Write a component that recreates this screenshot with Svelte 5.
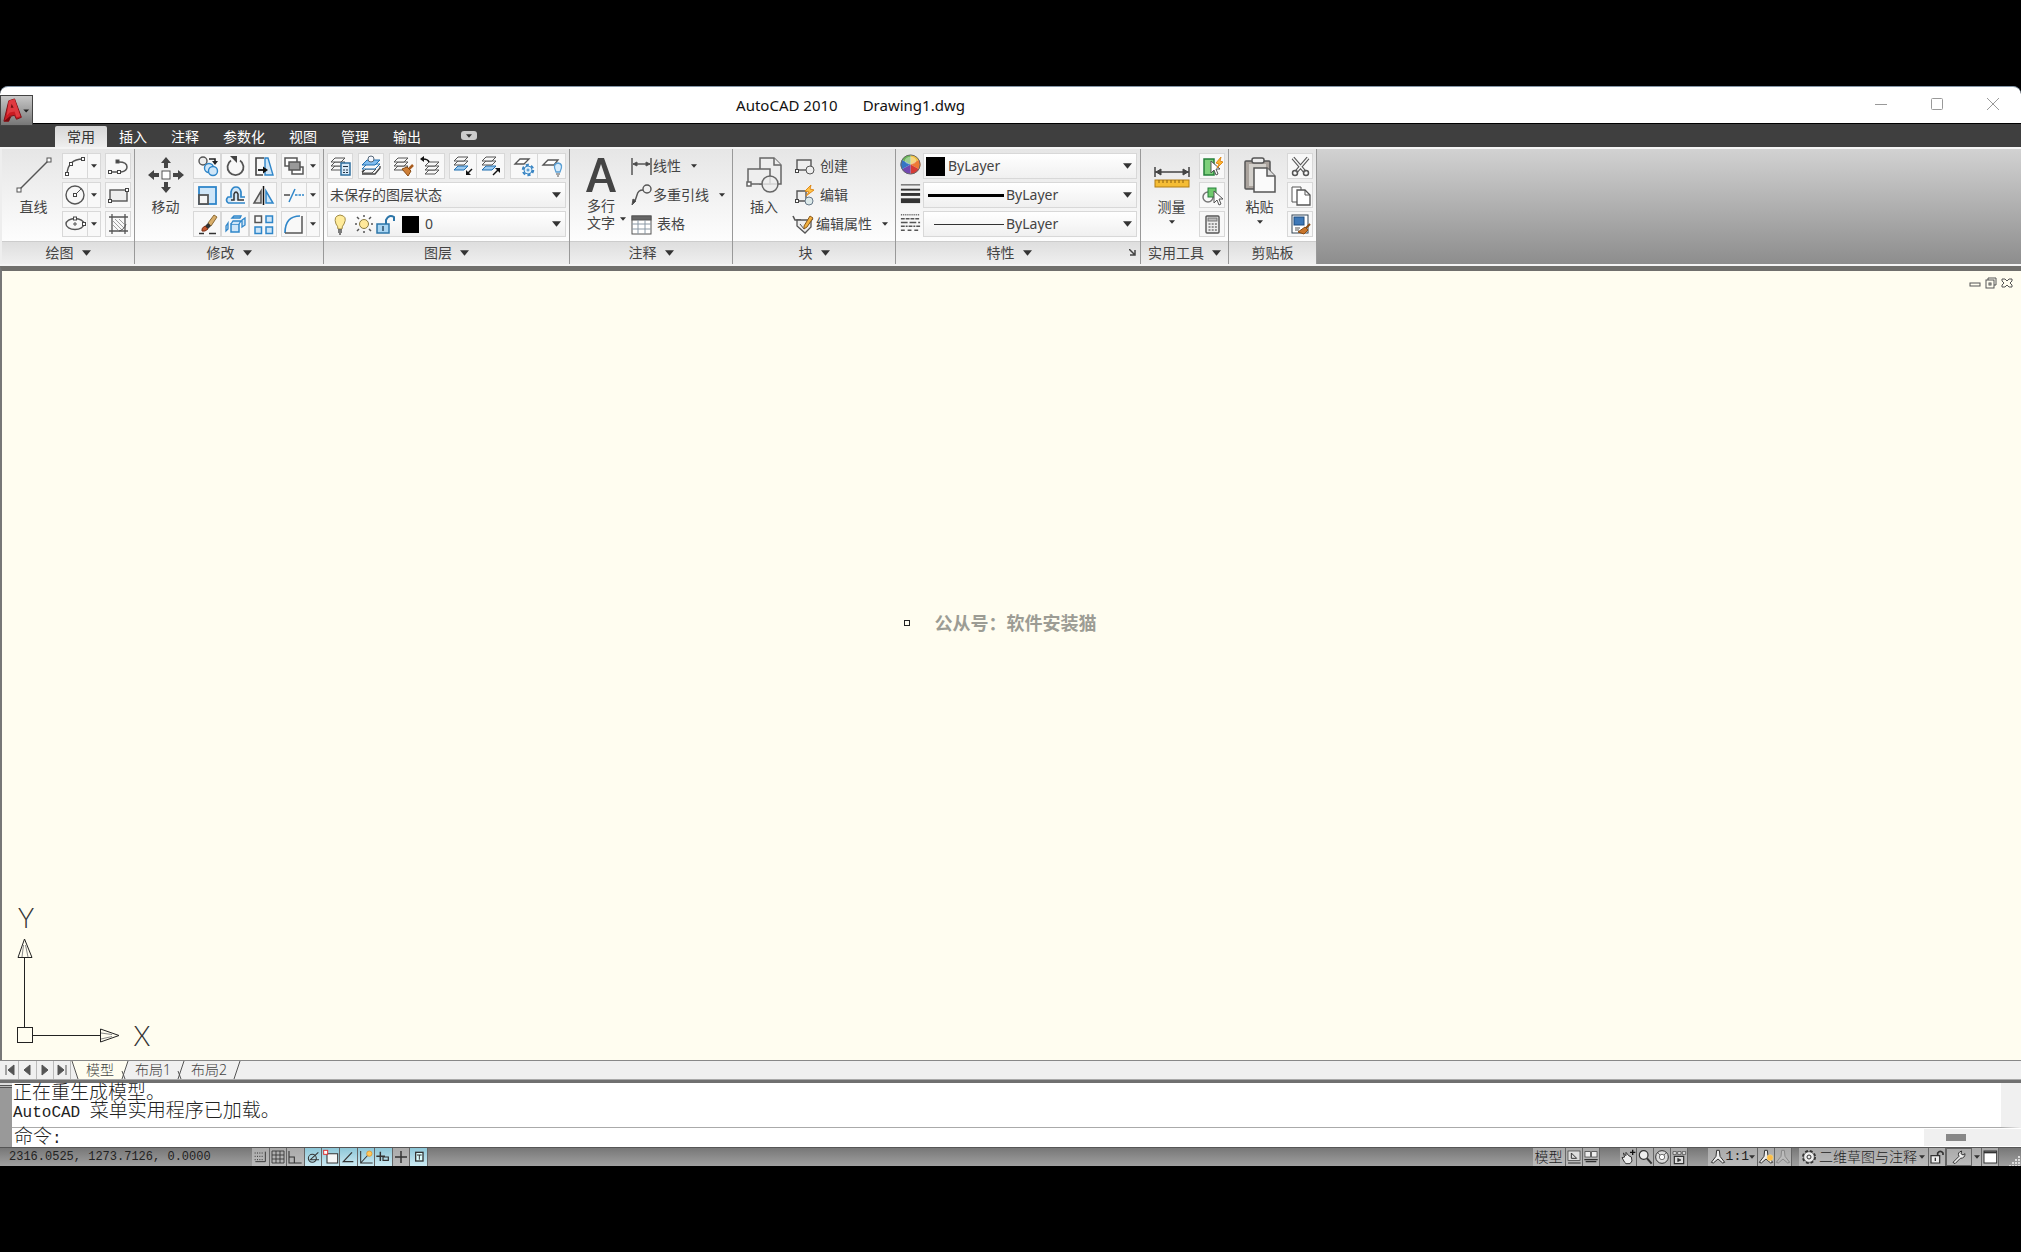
<script>
    const tabs = ["常用", "插入", "注释", "参数化", "视图", "管理", "输出"];
    let activeTab = $state("常用");
    let command = $state("");

    const sheet = (y, fill = "#f8f8f8", stroke = "#555") =>
        `<path d="M3 ${y + 4}L7 ${y}H17L13 ${y + 4}Z" fill="${fill}" stroke="${stroke}"/>`;
    const node = (x, y) =>
        `<rect x="${x - 1.5}" y="${y - 1.5}" width="3" height="3" fill="#fff" stroke="#444"/>`;
    const blue = `fill="#cfe6f8" stroke="#2f86c9"`;

    // 24px grid
    const icons = {
        arc: `<path d="M4 20Q5 5 20 5" stroke-width="1.4"/>${node(4, 20)}${node(8, 10)}${node(20, 5)}`,
        pline: `<path d="M4 18H15Q21 17 21 13Q21 8 13 8" stroke-width="1.5"/>${node(4, 18)}${node(13, 18)}<rect x="10" y="6" width="3" height="3" fill="#444"/>`,
        circle: `<circle cx="12" cy="12" r="9" stroke-width="1.4"/><path d="M12 12L18 6"/>${node(12, 12)}`,
        rect: `<rect x="4" y="7" width="17" height="11" fill="#eee" stroke-width="1.4"/>${node(4, 18)}${node(21, 7)}`,
        ellipse: `<ellipse cx="12" cy="12" rx="9" ry="5.5" stroke-width="1.4"/><path d="M10 12H14M12 10V14"/>${node(12, 6.5)}${node(21, 12)}`,
        hatch: `<path d="M3 5H22M3 19H22M6 2V22M19 2V22" stroke-width="1.3"/><path d="M7 9L16 18M7 13L12 18M9 7L18 16M13 7L18 12" stroke="#888" stroke-width=".8"/><path d="M13 19Q18 18 20 12"/>`,
        copy: `<circle cx="8" cy="7" r="4" fill="#eee" stroke-width="1.4"/><path d="M14 5H20V8" stroke="#222" stroke-width="1.6"/><path d="M17 7H23L20 11Z" fill="#222" stroke="none"/><circle cx="14" cy="14" r="4.5" ${blue} stroke-width="1.4"/><circle cx="18" cy="17" r="4.5" ${blue} stroke-width="1.4"/>`,
        rotate: `<path d="M8 6.5A8 8 0 1 0 17 6.5" stroke-width="1.8"/><path d="M7 2H14V9Z" fill="#444" stroke="none"/>`,
        stretch: `<path d="M14 4H17L22 21H14Z" ${blue} stroke-width="1.4"/><path d="M13 4H5V21H12" stroke="#444" stroke-width="1.6"/><path d="M7 16H13" stroke="#111" stroke-width="1.8"/><path d="M12 12.5L17 16L12 19.5Z" fill="#111" stroke="none"/>`,
        scale: `<rect x="4" y="4" width="17" height="17" ${blue} stroke-width="1.8"/><rect x="4" y="12" width="9" height="9" fill="#f4f4f4" stroke-width="1.8"/>`,
        offset: `<path d="M5 20Q2 17 5 14H8V9Q9 4 13 4Q17 4 18 9V14H22M5 20H22" fill="#cfe6f8" stroke="#2f86c9" stroke-width="1.7"/><path d="M8 17H11V11Q13 7 15 11V17H21" stroke="#333" stroke-width="1.5"/>`,
        mirror: `<path d="M10 8V20H3Z" fill="#ddd" stroke-width="1.5"/><path d="M15 8V20H22Z" ${blue} stroke-width="1.5"/><path d="M12.5 3V22" stroke="#111" stroke-width="1.5"/>`,
        erase: `<path d="M13 11L19 3L22 5L16 14Z" fill="#d9ae6a" stroke="#8b6a35"/><path d="M10 14L13 11L16 14L13 17Z" fill="#333" stroke="none"/><path d="M10 14L13 17Q10 20 7 19Q6 16 10 14Z" fill="#c2572f" stroke="#7e3318"/><path d="M4 21.5H9M14 21.5H21" stroke="#333" stroke-width="1.5"/>`,
        explode: `<path d="M8 12H16V20H8Z" ${blue} stroke-width="1.5"/><path d="M8 12L10 9H18L16 12M9 6L11 4H18L17 6ZM19 8L22 6V13L19 15ZM5 11L3 14V19L5 17Z" ${blue} stroke-width="1.3"/>`,
        array: `<g stroke-width="1.5"><rect x="4" y="4" width="6.5" height="6.5"/><rect x="15" y="4" width="6.5" height="6.5" ${blue}/><rect x="4" y="15" width="6.5" height="6.5" ${blue}/><rect x="15" y="15" width="6.5" height="6.5" ${blue}/></g>`,
        order: `<g stroke-width="1.5"><rect x="3" y="4" width="12" height="8" fill="#fff"/><rect x="10" y="13" width="11" height="7" fill="#fff"/><rect x="7" y="8" width="11" height="8" fill="#999"/></g>`,
        trim: `<path d="M2 12H8" stroke-width="1.6"/><path d="M13 12H22" stroke="#2f86c9" stroke-width="1.5" stroke-dasharray="2.5 1"/><path d="M7 19L13 6" stroke="#2f86c9" stroke-width="1.5"/>`,
        fillet: `<path d="M3 21Q3 4 18 4" stroke="#2f86c9" stroke-width="1.7"/><path d="M3 21H20V4" stroke-width="1.5"/>`,
        layerProps: `${sheet(12)}${sheet(8)}${sheet(4)}<rect x="13" y="9" width="9" height="12" fill="#d7e9f7" stroke="#2f6f9f" stroke-width="1.5"/><path d="M15 12.5H20M15 16H17M18 16H20M15 18.5H17M18 18.5H20" stroke="#234"/>`,
        layerCurrent: `${sheet(15)}<path d="M3 15L8 10H21L16 15Z" fill="#f8f8f8" stroke="#1f6fb0"/><path d="M3 11L8 6H21L16 11Z" fill="#7fbcf0" stroke="#1f6fb0"/><path d="M3 18L5 16M3 20H16L21 14V12" stroke="#444" stroke-width="1.3"/><circle cx="12" cy="5" r="3" fill="#f4f8ff" stroke="#567"/>`,
        layerMatch: `${sheet(12)}${sheet(8)}${sheet(4)}<path d="M22 11L18 15" stroke="#a85a1c" stroke-width="2.5"/><path d="M11 15L16 13L20 17L17 22Z" fill="#cf8038" stroke="#8a4b12"/>`,
        layerPrev: `<g transform="translate(4 4)">${sheet(12)}${sheet(8)}${sheet(4)}</g><path d="M11 8Q10 5 5 5" stroke="#111" stroke-width="1.5"/><path d="M6 2V8L2 5Z" fill="#111" stroke="none"/>`,
        layerIso: `${sheet(12, "#9ccaf0", "#1f6fb0")}${sheet(7)}${sheet(3)}<path d="M21 15L16 20" stroke="#111" stroke-width="1.5"/><path d="M15 16V21H20Z" fill="#111" stroke="none"/>`,
        layerUniso: `${sheet(12, "#9ccaf0", "#1f6fb0")}${sheet(7)}${sheet(3)}<path d="M14 21L20 15" stroke="#111" stroke-width="1.5"/><path d="M16 14H21V19Z" fill="#111" stroke="none"/>`,
        layerFreeze: `<path d="M3 10L8 5H17L12 10Z" fill="#fff" stroke-width="1.3"/><circle cx="16" cy="16" r="5" stroke="#3b86c4" stroke-width="2.5" stroke-dasharray="3 2.2"/><circle cx="16" cy="16" r="4" fill="#def0fb" stroke="#3b86c4"/><circle cx="16" cy="16" r="1" stroke="#3b86c4"/>`,
        layerOff: `<path d="M3 11L8 6H18L14 11Z" fill="#fff" stroke-width="1.3"/><path d="M16 18Q12 10 18 9Q24 10 20 18Z" fill="#d8ecfb" stroke="#5a9fd4" stroke-width="1.3"/><path d="M16 20H20M17 22H19"/>`,
        dimLinear: `<path d="M3 4V21M22 4V21M4 10H21" stroke-width="1.5"/><path d="M4 10L8 8V12ZM21 10L17 8V12Z" fill="#444"/>`,
        mleader: `<circle cx="18" cy="6" r="4" stroke-width="1.4"/><path d="M14 7Q9 7 8 12Q7 17 4 20" stroke-width="1.4"/><path d="M3 22L4 16L7 18Z" fill="#444"/>`,
        table: `<rect x="3" y="4" width="19" height="18" fill="#fff"/><rect x="3" y="4" width="19" height="4" fill="#666"/><path d="M3 12H22M3 17H22M9 8V22M16 8V22" stroke="#8a98a5"/>`,
        blockCreate: `<rect x="5" y="6" width="14" height="10" fill="#eee" stroke-width="1.4"/>${node(5, 17)}<circle cx="18" cy="16" r="4" fill="#eee"/>`,
        blockEdit: `<path d="M5 18V8H14V18Z" fill="#eee" stroke-width="1.4"/>${node(5, 18)}<circle cx="17" cy="18" r="4" fill="#dce9e9" stroke="#678"/><path d="M19 2L13 8L17 9L14 13L22 7L18 6Z" fill="#ffc34a" stroke="#e08a1a"/>`,
        attrEdit: `<path d="M1 4L3 8H9" stroke-width="1.6"/><path d="M5 8H19V15L13 21L5 14Z" fill="#eee" stroke-width="1.3"/><path d="M8 12L12 17L21 7" /><path d="M12 14L18 4L21 6L15 15L12 17Z" fill="#f3b13f" stroke="#8b5a1c"/>`,
        lineweight: `<g stroke="#333"><path d="M2 3H22" stroke-width="1"/><path d="M2 8H22" stroke-width="2"/><path d="M2 13H22" stroke-width="3"/><path d="M2 19.5H22" stroke-width="5"/></g>`,
        linetype: `<g stroke-width="1.5"><path d="M2 4H22" stroke-dasharray="1 1"/><path d="M2 8H22" stroke-dasharray="4 1"/><path d="M2 12H22" stroke-dasharray="7 2"/><path d="M2 16H22" stroke-dasharray="4 1 2 1"/><path d="M2 20H22" stroke-dasharray="4 3"/></g>`,
        quickSelect: `<rect x="4" y="5" width="10" height="16" fill="#7ed07b" stroke="#25803a" stroke-width="1.5"/><path d="M11 7V19L14 16L16 21L18 20L16 15H20Z" fill="#fff"/><path d="M21 3L16 9L19 10L17 14L23 8L20 7Z" fill="#ffb62f" stroke="#e08a1a"/>`,
        selectAll: `<circle cx="8" cy="14" r="5" stroke="#777" stroke-width="1.5"/><rect x="8" y="5" width="8" height="9" fill="#6fc96c" stroke="#25803a"/><path d="M14 8V20L17 17L19 22L21 21L19 16H23Z" fill="#fff"/>`,
        calc: `<rect x="6" y="4" width="13" height="17" rx="1" fill="#eee" stroke-width="1.4"/><rect x="8" y="6" width="9" height="3" fill="#bbb" stroke="#777"/><path d="M8.5 12H17M8.5 15H17M8.5 18H17" stroke="#777" stroke-width="1.5" stroke-dasharray="2 1.2"/>`,
        cut: `<path d="M5 4L17 18M20 4L8 18" stroke-width="3.5" stroke="#555"/><path d="M5 4L17 18M20 4L8 18" stroke="#f4f4f4" stroke-width="1.5"/><circle cx="7" cy="19" r="2.5" stroke-width="1.5"/><circle cx="18" cy="19" r="2.5" stroke-width="1.5"/>`,
        copyClip: `<path d="M4 4H13V19H4Z" fill="#fff"/><path d="M9 7H17L22 12V22H9Z" fill="#fff" stroke-width="1.3"/><path d="M17 7V12H22"/>`,
        matchProps: `<rect x="4" y="3" width="16" height="18" fill="#fff" stroke="#345"/><rect x="6" y="5" width="10" height="8" fill="#3d78b8" stroke="#1d4c80"/><path d="M7 16H12M7 18H11"/><path d="M22 12L18 16" stroke="#8a4b12" stroke-width="2"/><path d="M10 20L17 15L20 18L16 22Z" fill="#c9752b" stroke="#8a4b12"/>`,
        // status bar
        snap: `<path d="M4 6H16M4 11H16M4 16H16" stroke-width="1.5" stroke-dasharray="1.5 2"/><path d="M20 4V19H5" stroke-width="1.4"/>`,
        grid: `<path d="M3 3V21M9 3V21M15 3V21M21 3V21M3 3H21M3 9H21M3 15H21M3 21H21" stroke-width="1.3"/>`,
        ortho: `<path d="M3 3V21H22M3 12H11V21" stroke-width="1.6"/>`,
        polar: `<circle cx="11" cy="14" r="6" stroke-width="1.6"/><path d="M20 5L8 16H21" stroke-width="1.6"/>`,
        osnap: `<path d="M6 7H22V21H6Z" fill="#f6f6f6" stroke-width="1.6"/><rect x="1" y="2" width="6" height="6" fill="#fff" stroke="#d33" stroke-width="1.5"/>`,
        otrack: `<path d="M18 5L5 19H20" stroke-width="1.8"/>`,
        ducs: `<path d="M4 3V21H22M4 21L15 9" stroke-width="1.6"/><circle cx="17" cy="7" r="4" fill="#ffc75a" stroke="#da8b20"/>`,
        dyn: `<path d="M2 11H15M8 4V18" stroke-width="2.2"/><path d="M12 12H20V17H12Z" stroke-width="1.8"/>`,
        lwt: `<path d="M3 12H21M12 3V21" stroke-width="2.2"/>`,
        qp: `<rect x="7" y="5" width="11" height="13" fill="#dff" stroke-width="2"/><path d="M9 9H16M12.5 9V16" stroke-width="1.5"/>`,
        layoutA: `<rect x="3" y="3" width="18" height="14" fill="#ddd"/><path d="M8 6V14H16ZM3 21H22" stroke-width="1.5"/>`,
        layoutB: `<rect x="3" y="4" width="8" height="8" fill="#eee"/><rect x="13" y="4" width="8" height="8" fill="#eee"/><path d="M2 16H22M4 19H20" stroke-width="1.8"/>`,
        pan: `<path d="M7 20L3 13L7 12L5 6L9 10L9 5L13 10L17 12L18 18L15 22H9Z" fill="#eee" stroke-width="1.5"/><path d="M19 1V9M15 5H23" stroke="#111" stroke-width="2"/>`,
        zoom: `<circle cx="10" cy="9" r="6.5" fill="#eee" stroke-width="1.8"/><path d="M15 14L22 22" stroke-width="3"/>`,
        wheel: `<circle cx="12" cy="12" r="9.5" fill="#ddd" stroke-width="1.5"/><circle cx="12" cy="12" r="4" fill="#fff"/><path d="M5 5L9 9M19 5L15 9"/>`,
        motion: `<path d="M3 4H8V8H3ZM10 4H15V8H10ZM17 4H22V8H17Z" fill="#eee"/><path d="M5 11H19V22H5Z" fill="#ddd" stroke-width="1.8"/><path d="M10 14L15 16.5L10 19Z" fill="#333"/>`,
        scaleMark: `<path d="M10 2H14L15 11L22 20L19 21L12 15L5 21L2 20L9 11Z" fill="#eee" stroke-width="1.5"/>`,
        scaleSun: `<path d="M10 2H14L15 11L22 20L19 21L12 15L5 21L2 20L9 11Z" fill="#eee" stroke-width="1.5"/><circle cx="18" cy="13" r="4.5" fill="#ffbe45" stroke="#f2d487"/>`,
        scaleAuto: `<path d="M10 2H14L15 11L22 20L19 21L12 15L5 21L2 20L9 11Z" fill="#bbb" stroke="#888" stroke-width="1.5"/>`,
        gear: `<circle cx="12" cy="12" r="8.5" stroke-width="4" stroke-dasharray="4 2.7"/><circle cx="12" cy="12" r="8" fill="#eee"/><circle cx="12" cy="12" r="3" stroke-width="1.5"/>`,
        statusLock: `<path d="M3 10H16V21H3Z" fill="#eee" stroke-width="1.8"/><path d="M13 10V6Q17 1 21 6V9" stroke-width="2.5"/><path d="M9.5 13V18" stroke-width="2"/>`,
        wrench: `<path d="M3 20L12 11Q9 5 16 3L15 7L18 9L21 7Q21 14 14 14L6 22Z" fill="#eee" stroke-width="1.5"/>`,
        clean: `<rect x="3" y="3" width="19" height="18" fill="#fff" stroke-width="1.5"/><path d="M3 5H22" stroke-width="3"/>`,
    };

    const drawTools = [
        ["arc", "pline"],
        ["circle", "rect"],
        ["ellipse", "hatch"],
    ];
    const modifyTools = ["copy", "rotate", "stretch", "scale", "offset", "mirror", "erase", "explode", "array"];
    const modifySplit = ["order", "trim", "fillet"];
    const layerTools = [["layerProps"], ["layerCurrent"], ["layerMatch", "layerPrev"], ["layerIso", "layerUniso"], ["layerFreeze", "layerOff"]];

    let toggles = $state([
        { icon: "snap", on: false },
        { icon: "grid", on: false },
        { icon: "ortho", on: false },
        { icon: "polar", on: true },
        { icon: "osnap", on: true },
        { icon: "otrack", on: true },
        { icon: "ducs", on: true },
        { icon: "dyn", on: true },
        { icon: "lwt", on: false },
        { icon: "qp", on: true },
    ]);
</script>

{#snippet icon(name)}
    <svg class="icon" viewBox="0 0 24 24" fill="none" stroke="#555" aria-hidden="true">{@html icons[name]}</svg>
{/snippet}

{#snippet arrow()}
    <svg class="arrow" viewBox="0 0 10 6" aria-hidden="true"><path d="M0 0H10L5 6Z" /></svg>
{/snippet}

{#snippet tool(name)}
    <button class="tool" aria-label={name}>{@render icon(name)}</button>
{/snippet}

{#snippet split(name)}
    <div class="split">
        {@render tool(name)}
        <button class="drop" aria-label="{name} menu">{@render arrow()}</button>
    </div>
{/snippet}

{#snippet footer(title, menu = true)}
    <button class="panel-title">{title}{#if menu}{@render arrow()}{/if}</button>
{/snippet}

<div class="screen">
    <div class="window">
        <header class="titlebar">
            <h1><span>AutoCAD 2010</span><span>Drawing1.dwg</span></h1>
            <div class="window-buttons">
                <button aria-label="最小化"><svg viewBox="0 0 12 12"><path d="M0 6.5H12" /></svg></button>
                <button aria-label="最大化"><svg viewBox="0 0 12 12"><rect x="0.5" y="0.5" width="11" height="11" rx="1" /></svg></button>
                <button aria-label="关闭"><svg viewBox="0 0 12 12"><path d="M0 0L12 12M12 0L0 12" /></svg></button>
            </div>
            <button class="app-button" aria-label="应用程序菜单">
                <svg viewBox="0 0 32 31">
                    <path d="M3 26L8 5L14 3L21 22L16 24L14 20L9 21L8 26Z" fill="#c91b22" stroke="#7d1015" />
                    <path d="M8 5L14 3L20 21L16 22L14 16L9 17L6 20Z" fill="#e03a40" />
                    <path d="M11 8L13 12H10Z" fill="#741013" />
                    <path d="M3 26L8 26L11 21L8 22Z" fill="#78090f" />
                    <path d="M23 14H29L26 17Z" fill="#222" />
                </svg>
            </button>
        </header>

        <nav class="tabs">
            {#each tabs as tab (tab)}
                <button class:active={tab === activeTab} onclick={() => (activeTab = tab)}>{tab}</button>
            {/each}
            <button class="pill" aria-label="最小化功能区">{@render arrow()}</button>
        </nav>

        <div class="ribbon">
            <section class="panel draw">
                <div class="body">
                    <button class="big">
                        <svg viewBox="0 0 36 36" fill="none" stroke="#555">
                            <path d="M3 33L33 3" stroke-width="1.5" />
                            <rect x="1" y="31" width="4" height="4" fill="#fff" /><rect x="31" y="1" width="4" height="4" fill="#fff" />
                        </svg>
                        直线
                    </button>
                    <div class="grid draw-grid">
                        {#each drawTools as [left, right]}
                            {@render split(left)}
                            {@render tool(right)}
                        {/each}
                    </div>
                </div>
                {@render footer("绘图")}
            </section>

            <section class="panel modify">
                <div class="body">
                    <button class="big">
                        <svg viewBox="0 0 36 36" fill="#444">
                            <path d="M18 0L23 6H20V11H16V6H13ZM18 36L23 30H20V25H16V30H13ZM0 18L6 13V16H11V20H6V23ZM36 18L30 13V16H25V20H30V23Z" />
                            <rect x="14" y="14" width="8" height="8" fill="#fff" stroke="#555" />
                        </svg>
                        移动
                    </button>
                    <div class="grid modify-grid">
                        {#each modifyTools as name}{@render tool(name)}{/each}
                    </div>
                    <div class="stack">
                        {#each modifySplit as name}{@render split(name)}{/each}
                    </div>
                </div>
                {@render footer("修改")}
            </section>

            <section class="panel layers">
                <div class="body stack">
                    <div class="layer-tools">
                        {#each layerTools as group}
                            <div class="group">{#each group as name}{@render tool(name)}{/each}</div>
                        {/each}
                    </div>
                    <div class="combo">
                        <select aria-label="图层状态"><option>未保存的图层状态</option></select>
                        {@render arrow()}
                    </div>
                    <div class="combo">
                        <svg class="layer-state" viewBox="0 0 72 24" fill="none" stroke="#555" aria-hidden="true">
                            <path d="M10 17Q10 14 8 12Q5 4 12 3Q20 4 16 12Q14 14 14 17Z" fill="#ffeb9a" stroke="#a18b43" />
                            <path d="M10 18H14M10 20H14M11 22H13" stroke-width="1.5" />
                            <circle cx="36" cy="12" r="4.5" fill="#ffe89a" stroke="#8a7a40" />
                            <path d="M36 3V5M36 19V21M27 12H29M43 12H45M29 5L31 7M41 17L43 19M43 5L41 7M31 17L29 19" stroke-width="1.5" />
                            <rect x="49" y="12" width="12" height="9" fill="#a9d5f2" stroke="#2c75a8" stroke-width="1.5" />
                            <path d="M58 12V8Q61 2 66 5V9" stroke="#2c75a8" stroke-width="2" />
                            <path d="M55 14V19" stroke="#2c4c68" stroke-width="1.5" />
                        </svg>
                        <span class="swatch"></span>
                        <select aria-label="图层"><option>0</option></select>
                        {@render arrow()}
                    </div>
                </div>
                {@render footer("图层")}
            </section>

            <section class="panel annotate">
                <div class="body">
                    <button class="big two-line">
                        <svg viewBox="0 0 36 36" fill="#444"><path fill-rule="evenodd" d="M3 35L15 1H21L33 35H27L24 26H12L9 35ZM13 22H23L18 7Z" /></svg>
                        <span>多行<br />文字</span>
                        {@render arrow()}
                    </button>
                    <div class="stack list">
                        <button class="item">{@render icon("dimLinear")}线性{@render arrow()}</button>
                        <button class="item">{@render icon("mleader")}多重引线{@render arrow()}</button>
                        <button class="item">{@render icon("table")}表格</button>
                    </div>
                </div>
                {@render footer("注释")}
            </section>

            <section class="panel block">
                <div class="body">
                    <button class="big">
                        <svg viewBox="0 0 36 36" fill="#eee" stroke="#666" stroke-width="1.5">
                            <path d="M14 1H28L35 8V27H14Z" /><path d="M28 1V8H35" />
                            <path d="M2 12H24V27H2Z" /><rect x="1" y="25" width="4" height="4" fill="#fff" />
                            <circle cx="24" cy="27" r="8" fill-opacity=".8" />
                        </svg>
                        插入
                    </button>
                    <div class="stack list">
                        <button class="item">{@render icon("blockCreate")}创建</button>
                        <button class="item">{@render icon("blockEdit")}编辑</button>
                        <button class="item">{@render icon("attrEdit")}编辑属性{@render arrow()}</button>
                    </div>
                </div>
                {@render footer("块")}
            </section>

            <section class="panel props">
                <div class="body stack">
                    <div class="prop">
                        <svg class="icon" viewBox="0 0 24 24" aria-hidden="true">
                            <path d="M12 12V2A10 10 0 0 1 21 7Z" fill="#f0c040" /><path d="M12 12L21 7A10 10 0 0 1 21 17Z" fill="#ee7a35" />
                            <path d="M12 12L21 17A10 10 0 0 1 12 22Z" fill="#d63b35" /><path d="M12 12V22A10 10 0 0 1 3 17Z" fill="#7248b0" />
                            <path d="M12 12L3 17A10 10 0 0 1 3 7Z" fill="#3575c5" /><path d="M12 12L3 7A10 10 0 0 1 12 2Z" fill="#68b557" />
                            <circle cx="12" cy="12" r="10" fill="none" stroke="#666" />
                            <ellipse cx="12" cy="8" rx="6" ry="4" fill="#fff" fill-opacity=".35" />
                        </svg>
                        <div class="combo">
                            <span class="swatch large"></span>
                            <select aria-label="对象颜色"><option>ByLayer</option></select>
                            {@render arrow()}
                        </div>
                    </div>
                    <div class="prop">
                        {@render icon("lineweight")}
                        <div class="combo">
                            <span class="rule thick"></span>
                            <select aria-label="线宽"><option>ByLayer</option></select>
                            {@render arrow()}
                        </div>
                    </div>
                    <div class="prop">
                        {@render icon("linetype")}
                        <div class="combo">
                            <span class="rule"></span>
                            <select aria-label="线型"><option>ByLayer</option></select>
                            {@render arrow()}
                        </div>
                    </div>
                </div>
                <div class="title-row">
                    {@render footer("特性")}
                    <button class="launcher" aria-label="特性选项板"><svg viewBox="0 0 7 7"><path d="M0 0L6 6M6 1V6H1" /></svg></button>
                </div>
            </section>

            <section class="panel utils">
                <div class="body">
                    <button class="big">
                        <svg viewBox="0 0 36 36" fill="none" stroke="#444">
                            <path d="M1 10V20M35 10V20M1 15H35" stroke-width="1.5" /><path d="M2 15L7 12V18ZM34 15L29 12V18Z" fill="#444" />
                            <rect x="1" y="23" width="34" height="7" fill="#f5bd35" stroke="#b07c16" /><path d="M5 23V26M9 23V26M13 23V26M17 23V26M21 23V26M25 23V26M29 23V26" stroke="#8a6010" />
                        </svg>
                        测量
                        {@render arrow()}
                    </button>
                    <div class="stack">
                        {@render tool("quickSelect")}{@render tool("selectAll")}{@render tool("calc")}
                    </div>
                </div>
                {@render footer("实用工具")}
            </section>

            <section class="panel clip">
                <div class="body">
                    <button class="big">
                        <svg viewBox="0 0 36 36" stroke="#555" stroke-width="1.5">
                            <rect x="3" y="4" width="25" height="28" rx="1" fill="#aaa39d" /><rect x="7" y="7" width="17" height="22" fill="#d3d0cb" stroke="none" />
                            <rect x="10" y="1" width="12" height="5" rx="2" fill="#eee" />
                            <path d="M12 11H25L33 19V35H12Z" fill="#fafafa" /><path d="M25 11V19H33" fill="#ddd" />
                        </svg>
                        粘贴
                        {@render arrow()}
                    </button>
                    <div class="stack">
                        {@render tool("cut")}{@render tool("copyClip")}{@render tool("matchProps")}
                    </div>
                </div>
                {@render footer("剪贴板", false)}
            </section>
        </div>

        <main class="canvas">
            <div class="doc-buttons">
                <button aria-label="最小化图形"><svg viewBox="0 0 12 12"><rect x="1" y="6" width="10" height="3" /></svg></button>
                <button aria-label="还原图形"><svg viewBox="0 0 12 12"><path d="M3 3V1H11V8H9" /><rect x="1" y="3" width="8" height="8" /><rect x="4" y="6" width="2" height="2" /></svg></button>
                <button aria-label="关闭图形"><svg viewBox="0 0 12 12"><path d="M1 2H4L6 4L8 2H11V4L9 6L11 8V10H8L6 8L4 10H1V8L3 6L1 4V2Z" /></svg></button>
            </div>
            <div class="cursor"><span class="pickbox"></span><span>公从号：软件安装猫</span></div>
            <svg class="ucs" viewBox="0 0 150 150" fill="none" stroke="#222">
                <path d="M22.5 130V60M30 138.5H98" />
                <rect x="15.5" y="130.5" width="15" height="15" />
                <path d="M22.5 42L16 60.5H30ZM117 138.5L98.5 132V145Z" />
                <path d="M21.5 48L20 60M23.5 48L26 60M110 137.5L99 136M110 139.5L99 142" stroke="#888" />
                <text x="24" y="31" text-anchor="middle">Y</text>
                <text x="140" y="149" text-anchor="middle">X</text>
            </svg>
        </main>

        <div class="sheets">
            <div class="pager">
                <button aria-label="第一个"><svg viewBox="0 0 12 12"><path d="M2 1V11" /><path d="M10 1V11L4 6Z" fill="#555" /></svg></button>
                <button aria-label="上一个"><svg viewBox="0 0 12 12"><path d="M9 1V11L3 6Z" fill="#555" /></svg></button>
                <button aria-label="下一个"><svg viewBox="0 0 12 12"><path d="M3 1V11L9 6Z" fill="#555" /></svg></button>
                <button aria-label="最后一个"><svg viewBox="0 0 12 12"><path d="M10 1V11" /><path d="M2 1V11L8 6Z" fill="#555" /></svg></button>
            </div>
            <svg class="edge" viewBox="0 0 8 18"><path d="M0 0H8V18H7Z" fill="#fffdf0" stroke="none" /><path d="M1 0L7 18" /></svg>
            <button class="model">模型</button>
            <svg class="edge" viewBox="0 0 8 18"><path d="M0 0H7L1 18H0Z" fill="#fffdf0" stroke="none" /><path d="M7 0L1 18M1 10L4 18" /></svg>
            <button>布局1</button>
            <svg class="edge" viewBox="0 0 8 18"><path d="M7 0L1 18M1 10L4 18" /></svg>
            <button>布局2</button>
            <svg class="edge" viewBox="0 0 8 18"><path d="M7 0L1 18" /></svg>
        </div>

        <div class="command">
            <div class="grip"></div>
            <div class="console">
                <div class="history">
                    <p>正在重生成模型。</p>
                    <p><span class="mono">{"AutoCAD "}</span>菜单实用程序已加载。</p>
                </div>
                <div class="prompt">
                    <label for="cmd">命令<span class="mono">:</span></label>
                    <input id="cmd" bind:value={command} />
                    <div class="scroll"><span></span></div>
                </div>
            </div>
        </div>

        <footer class="status">
            <span class="coords">2316.0525, 1273.7126, 0.0000</span>
            <div class="toggles">
                {#each toggles as toggle}
                    <button class:on={toggle.on} aria-label={toggle.icon} onclick={() => (toggle.on = !toggle.on)}>{@render icon(toggle.icon)}</button>
                {/each}
            </div>
            <div class="status-group">
                <button class="label">模型</button>
                <button aria-label="布局">{@render icon("layoutA")}</button>
                <button aria-label="快速查看">{@render icon("layoutB")}</button>
            </div>
            <div class="status-group">
                <button aria-label="平移">{@render icon("pan")}</button>
                <button aria-label="缩放">{@render icon("zoom")}</button>
                <button aria-label="控制盘">{@render icon("wheel")}</button>
                <button aria-label="运动">{@render icon("motion")}</button>
            </div>
            <div class="status-group scales">
                <button class="label">{@render icon("scaleMark")}<span class="ratio">1:1</span>{@render arrow()}</button>
                <button aria-label="注释可见性">{@render icon("scaleSun")}</button>
                <button aria-label="自动缩放">{@render icon("scaleAuto")}</button>
            </div>
            <div class="status-group last">
                <button class="label">{@render icon("gear")}二维草图与注释{@render arrow()}</button>
                <button aria-label="锁定">{@render icon("statusLock")}</button>
                <button class="wide" aria-label="硬件加速">{@render icon("wrench")}</button>
                <button class="menu" aria-label="状态栏菜单">{@render arrow()}</button>
                <button aria-label="全屏显示">{@render icon("clean")}</button>
            </div>
            <svg class="resize" viewBox="0 0 12 12"><path d="M10 2V12M7 5V12M4 8V12M1 11V12" stroke-dasharray="2 1" /></svg>
        </footer>
    </div>
</div>

<style>
    :global(body) {
        background: #000;
    }

    .screen {
        height: 100vh;
        min-height: 600px;
        box-sizing: border-box;
        padding: 86px 0;
        background: #000;
        color: #444;
        font: 14px/20px "Noto Sans", "Noto Sans CJK SC", sans-serif;
    }

    .window {
        position: relative;
        height: 100%;
        display: flex;
        flex-direction: column;
        overflow: hidden;
    }

    button,
    select,
    input {
        margin: 0;
        padding: 0;
        border: none;
        background: none;
        color: inherit;
        font: inherit;
        white-space: nowrap;
    }

    svg {
        display: block;
        flex: none;
    }

    .icon {
        width: 24px;
        height: 24px;
    }

    .arrow {
        width: 6px;
        height: 4px;
        fill: #333;
    }

    .titlebar {
        display: flex;
        box-sizing: border-box;
        height: 37px;
        border-top: 1px solid #8496a8;
        border-radius: 8px 8px 0 0;
        background: #fff;
    }

    h1 {
        flex: 1;
        display: flex;
        justify-content: center;
        gap: 25px;
        margin: 0;
        padding-right: 152px;
        color: #111;
        font-size: 15px;
        font-weight: 400;
        line-height: 36px;
    }

    .window-buttons {
        display: flex;
        padding-bottom: 2px;
    }

    .window-buttons button {
        display: grid;
        place-items: center;
        width: 56px;
    }

    .window-buttons svg {
        width: 12px;
        height: 12px;
        fill: none;
        stroke: #999;
    }

    .app-button {
        position: absolute;
        top: 9px;
        left: 0;
        box-sizing: border-box;
        width: 33px;
        height: 31px;
        border: 1px solid #444;
        background: linear-gradient(#c8c8c8, #777);
    }

    .tabs {
        display: flex;
        align-items: flex-end;
        height: 23px;
        padding-left: 55px;
        border-top: 1px solid #000;
        background: #3f3f3f;
    }

    .tabs button {
        height: 21px;
        padding: 0 12px;
        border-radius: 2px 2px 0 0;
        color: #fff;
        line-height: 18px;
    }

    .tabs .active {
        background: linear-gradient(#d6d6d6, #eee);
        color: #333;
    }

    .tabs .pill {
        align-self: center;
        display: grid;
        place-items: center;
        width: 16px;
        height: 9px;
        margin-left: 28px;
        padding: 0;
        border-radius: 3px;
        background: #ccc;
    }

    .ribbon {
        display: flex;
        height: 115px;
        border-top: 2px solid #f4f4f4;
        border-bottom: 2px solid #f4f4f4;
        background: linear-gradient(#d2d2d2, #8d8d8d);
    }

    .panel {
        display: flex;
        flex-direction: column;
        box-sizing: border-box;
        border-right: 1px solid #999;
        background: #fff;
    }

    .body {
        display: flex;
        box-sizing: border-box;
        height: 92px;
        padding: 4px 3px;
        background: linear-gradient(#e6e6e6, #fdfdfd);
    }

    .draw {
        width: 135px;
        border-left: 2px solid #eee;
    }

    .modify {
        width: 189px;
    }

    .layers {
        width: 246px;
    }

    .annotate,
    .block {
        width: 163px;
    }

    .props {
        width: 245px;
    }

    .utils,
    .clip {
        width: 88px;
    }

    .panel-title {
        display: flex;
        flex: 1;
        align-items: center;
        justify-content: center;
        gap: 8px;
        border-top: 1px solid #ccc;
        background: linear-gradient(#dedede, #efefef);
    }

    .panel-title .arrow {
        width: 9px;
        height: 6px;
    }

    .title-row {
        position: relative;
        display: flex;
        flex: 1;
    }

    .title-row .panel-title {
        padding-right: 18px;
    }

    .launcher {
        position: absolute;
        right: 4px;
        bottom: 8px;
    }

    .launcher svg {
        width: 7px;
        height: 7px;
        fill: none;
        stroke: #444;
        stroke-width: 1.5;
    }

    .big {
        display: flex;
        flex: 1;
        flex-direction: column;
        align-items: center;
        padding-top: 4px;
    }

    .big > svg:first-child {
        width: 36px;
        height: 36px;
        margin-bottom: 4px;
    }

    .big .arrow {
        margin-top: 3px;
    }

    .two-line {
        position: relative;
        line-height: 17px;
    }

    .two-line .arrow {
        position: absolute;
        right: 3px;
        bottom: 16px;
    }

    .stack {
        display: flex;
        flex-direction: column;
        gap: 3px;
    }

    .grid {
        display: grid;
        row-gap: 3px;
        align-content: start;
    }

    .draw-grid {
        grid-template-columns: 39px 26px;
        column-gap: 4px;
    }

    .modify-grid {
        grid-template-columns: repeat(3, 28px);
        margin-right: 4px;
    }

    .split {
        display: flex;
        width: 39px;
    }

    .tool,
    .drop,
    .combo {
        display: flex;
        align-items: center;
        justify-content: center;
        box-sizing: border-box;
        height: 26px;
        border: 1px solid #d8d8d8;
        background: #f8f8f8;
    }

    .tool {
        min-width: 26px;
    }

    .drop {
        width: 13px;
        border-left: none;
    }

    .layer-tools {
        display: flex;
        justify-content: space-between;
    }

    .group {
        display: flex;
    }

    .group .tool + .tool {
        border-left: none;
    }

    .group .tool:not(:only-child) {
        width: 28px;
    }

    .combo {
        position: relative;
        flex: 1;
        background: linear-gradient(#fff, #f0f0f0);
    }

    .combo select {
        flex: 1;
        width: 0;
        height: 24px;
        padding: 0 16px 0 2px;
        appearance: none;
    }

    .combo .arrow {
        position: absolute;
        right: 4px;
        width: 9px;
        height: 6px;
        pointer-events: none;
    }

    .layer-state {
        width: 72px;
        height: 24px;
    }

    .swatch {
        width: 17px;
        height: 17px;
        margin: 0 4px 0 2px;
        background: #000;
    }

    .swatch.large {
        width: 19px;
        height: 19px;
        margin: 0 1px 0 2px;
    }

    .list {
        width: 100px;
    }

    .item {
        display: flex;
        align-items: center;
        height: 26px;
    }

    .item .arrow {
        margin-left: 10px;
    }

    .annotate .item:last-child,
    .block .item:not(:last-child) {
        gap: 4px;
    }

    .prop {
        display: flex;
    }

    .prop .icon {
        width: 23px;
        height: 23px;
        margin-right: 1px;
    }

    .rule {
        width: 70px;
        height: 1px;
        margin-left: 10px;
        background: #333;
    }

    .rule.thick {
        width: 76px;
        height: 3px;
        margin-left: 4px;
        background: #000;
    }

    .canvas {
        position: relative;
        flex: 1;
        border-top: 5px solid #706f6c;
        border-left: 2px solid #777;
        background: #fffdf0;
    }

    .doc-buttons {
        position: absolute;
        top: 6px;
        right: 8px;
        display: flex;
        gap: 4px;
    }

    .doc-buttons svg {
        width: 12px;
        height: 12px;
        fill: none;
        stroke: #555;
    }

    .cursor {
        position: absolute;
        top: 43.4%;
        left: 44.7%;
        display: flex;
        align-items: center;
        gap: 24px;
        color: #9c9c94;
        font-size: 18px;
        font-weight: 700;
        line-height: 20px;
    }

    .pickbox {
        width: 4px;
        height: 4px;
        border: 1px solid #222;
    }

    .ucs {
        position: absolute;
        bottom: 13px;
        left: 0;
        width: 150px;
        height: 150px;
        overflow: visible;
    }

    .ucs text {
        fill: #333;
        stroke: none;
        font: 300 27px Lato, sans-serif;
    }

    .sheets {
        display: flex;
        height: 18px;
        padding-left: 2px;
        border-top: 1px solid #888;
        border-bottom: 1px solid #aaa;
        background: #f0f0f0;
        font-weight: 300;
        line-height: 16px;
    }

    .pager {
        display: flex;
        width: 69px;
    }

    .pager button {
        display: grid;
        flex: 1;
        place-items: center;
        border-right: 1px solid #bbb;
    }

    .pager svg {
        width: 12px;
        height: 12px;
        stroke: #555;
    }

    .edge {
        width: 8px;
        height: 18px;
        fill: none;
        stroke: #555;
    }

    .sheets > button {
        padding: 0 6px;
    }

    .sheets .model {
        padding: 0 7px;
        background: #fffdf0;
    }

    .command {
        display: flex;
        height: 64px;
        border-top: 3px solid #707070;
        background: #fff;
        color: #222;
        font-size: 19px;
        font-weight: 300;
        line-height: 18px;
    }

    .grip {
        width: 12px;
        background: linear-gradient(#ddd 0 2px, #555 2px 3px, #bbb 3px 4px, #555 4px 5px, #999 5px);
    }

    .console {
        flex: 1;
    }

    .history {
        box-sizing: border-box;
        height: 45px;
        padding-left: 1px;
        border-right: 20px solid #f0f0f0;
        border-bottom: 1px solid #aaa;
    }

    p {
        margin: 0;
    }

    .mono {
        font: 16px/18px "Liberation Mono", monospace;
        white-space: pre;
    }

    .prompt {
        display: flex;
        align-items: center;
        height: 19px;
        padding-left: 2px;
    }

    .prompt input {
        flex: 1;
        height: 18px;
        outline: none;
    }

    .scroll {
        box-sizing: border-box;
        width: 97px;
        height: 17px;
        padding: 5px 22px;
        background: #f0f0f0;
    }

    .scroll span {
        display: block;
        width: 20px;
        height: 7px;
        background: #888;
    }

    .status {
        display: flex;
        box-sizing: border-box;
        height: 19px;
        padding-left: 9px;
        border-top: 1px solid #555;
        background: linear-gradient(#777, #a0a0a0);
        color: #222;
        line-height: 18px;
    }

    .status button {
        display: flex;
        align-items: center;
        justify-content: center;
        box-sizing: border-box;
        border-right: 1px solid #666;
        background: linear-gradient(#aaa, #bbb);
        font-weight: 300;
    }

    .status .icon {
        width: 16px;
        height: 16px;
        stroke: #333;
    }

    .coords {
        width: 243px;
        font: 12px/18px "Liberation Mono", monospace;
    }

    .toggles {
        display: flex;
        width: 176px;
        margin-right: auto;
    }

    .toggles button {
        flex: 1;
    }

    .toggles .on {
        background: linear-gradient(#8ec7d8, #cdeaf3);
    }

    .status-group {
        display: flex;
        margin-right: 20px;
    }

    .status-group button {
        width: 17px;
    }

    .status-group .label {
        width: auto;
        padding: 0 2px;
    }

    .status-group.scales {
        margin-right: 7px;
    }

    .status-group.last {
        margin-right: 10px;
    }

    .last .label {
        gap: 2px;
        padding-right: 3px;
    }

    .status-group .wide {
        width: 26px;
        border: 1px solid #666;
    }

    .status-group .menu {
        width: 10px;
    }

    .ratio {
        font: 13px/18px "Liberation Mono", monospace;
    }

    .resize {
        align-self: flex-end;
        width: 12px;
        height: 12px;
        stroke: #ddd;
        stroke-width: 2;
    }
</style>
